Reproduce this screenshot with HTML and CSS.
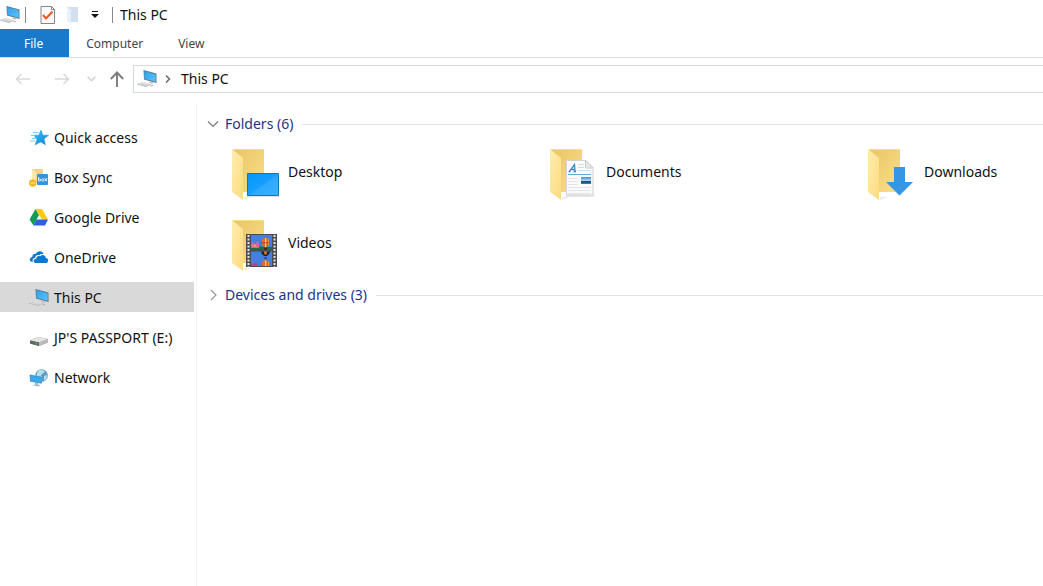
FILE: index.html
```html
<!DOCTYPE html>
<html lang="en">
<head>
<meta charset="utf-8">
<title>This PC</title>
<link rel="stylesheet" href="styles.css">
</head>
<body>
<svg class="defs" aria-hidden="true">
  <defs>
    <linearGradient id="screen" x1="0" y1="0" x2="1" y2="1"><stop offset="0" stop-color="#2f9fe8"/><stop offset="1" stop-color="#58c4ff"/></linearGradient>
    <linearGradient id="back" x1="0" y1="0" x2="1" y2="1"><stop offset="0" stop-color="#e8c566"/><stop offset="1" stop-color="#fbdf8a"/></linearGradient>
    <linearGradient id="flap" x1="0" y1="0" x2="1" y2="1"><stop offset="0" stop-color="#ffedb0"/><stop offset="1" stop-color="#fddb80"/></linearGradient>
    <linearGradient id="desk" x1="0" y1="0" x2="1" y2="1"><stop offset="0" stop-color="#0596f8"/><stop offset=".5" stop-color="#159fff"/><stop offset=".52" stop-color="#2ba9ff"/><stop offset="1" stop-color="#3db2ff"/></linearGradient>
    <linearGradient id="star" x1="0" y1="0" x2="1" y2="1"><stop offset="0" stop-color="#3fc0fa"/><stop offset="1" stop-color="#0b82d6"/></linearGradient>
    <linearGradient id="photo" x1="0" y1="0" x2="0" y2="1"><stop offset="0" stop-color="#3b8fdc"/><stop offset=".55" stop-color="#b5dcf2"/><stop offset=".6" stop-color="#25414f"/><stop offset="1" stop-color="#2d83c5"/></linearGradient>
    <linearGradient id="balloon"><stop offset="0" stop-color="#c22a3a"/><stop offset=".2" stop-color="#f08a20"/><stop offset=".35" stop-color="#e63a2b"/><stop offset=".5" stop-color="#ffd93a"/><stop offset=".7" stop-color="#e8432a"/><stop offset=".85" stop-color="#f7b326"/><stop offset="1" stop-color="#7b2b4e"/></linearGradient>
    <symbol id="pc" viewBox="0 0 20 18">
      <path d="M6.500 0 19.500 3.500v9.500L7 9.500z" fill="#5e7584"/>
      <path d="M7.200 1 18.700 4.200v7.600L7.600 8.800z" fill="url(#screen)"/>
      <path d="m13 11.500 3 1v1.200l-4-1z" fill="#b4babe"/>
      <path d="M0 14 5.500 12l8.500 2.200-5 2.300z" fill="#e2e4e6"/>
      <path d="m0 14 9 2.500 5-2.300" fill="none" stroke="#a9b0b5" stroke-width=".8"/>
      <path d="m3 13 7.500 2.500M6 12.500l-4 2M9 13l-4 2M11.500 13.800l-4 2" fill="none" stroke="#c3c8cc" stroke-width=".5"/>
      <path d="m13 16 2-1 1.500.6-2 1z" fill="#a5abb0"/>
    </symbol>
    <symbol id="folder" viewBox="0 0 32 52">
      <path d="M12 48h8l-8 3z" fill="#eee"/>
      <path d="M1 0h31v43H11z" fill="url(#back)"/>
      <path d="M0 0l11 9v42L0 43z" fill="url(#flap)"/>
      <path d="M0 0h32v1H1z" fill="#f8dc8a"/>
    </symbol>
  </defs>
</svg>
<div class="window">
  <header>
    <div class="titlebar">
      <svg class="icon app" aria-hidden="true"><use href="#pc"/></svg>
      <span class="sep"></span>
      <div class="tools">
        <button aria-label="Properties"><svg width="16" height="20" viewBox="0 0 16 20"><path d="M1 1.500h10.500l3 3v14H1z" fill="#fafafa" stroke="#858585"/><path d="M11.500 1.500v3h3" fill="none" stroke="#858585"/><path d="m3 10 3 3.500 6.500-7" fill="none" stroke="#f0571b" stroke-width="2"/></svg></button>
        <button aria-label="New folder"><svg width="13" height="18" viewBox="0 0 13 18"><path d="M1 1h11v15H4z" fill="#d3dff0"/><path d="m1 1 4 3v14l-4-3z" fill="#e9f0f9"/></svg></button>
        <button aria-label="Customize toolbar"><svg width="8" height="8" viewBox="0 0 8 8"><path d="M1 0h6v1H1zM0 3h8L4 7z" fill="#111"/></svg></button>
      </div>
      <span class="sep"></span>
      <h1>This PC</h1>
    </div>
    <nav class="tabs" aria-label="Ribbon">
      <button class="tab file">File</button>
      <button class="tab">Computer</button>
      <button class="tab">View</button>
    </nav>
    <div class="addressbar">
      <div class="history">
        <button aria-label="Back"><svg width="16" height="14" viewBox="0 0 16 14"><path d="M15 7H1.500M6.500 2 1.500 7l5 5" fill="none" stroke="#d9d9d9" stroke-width="1.500"/></svg></button>
        <button aria-label="Forward"><svg width="16" height="14" viewBox="0 0 16 14"><path d="M1 7h13.500M9.500 2l5 5-5 5" fill="none" stroke="#d9d9d9" stroke-width="1.500"/></svg></button>
        <button class="recent" aria-label="Recent locations"><svg width="9" height="6" viewBox="0 0 9 6"><path d="m.7.7 3.800 4 3.800-4" fill="none" stroke="#d0d0d0" stroke-width="1.600"/></svg></button>
        <button class="up" aria-label="Up"><svg width="14" height="16" viewBox="0 0 14 16"><path d="M7 16V2M.8 8 7 1.500 13.200 8" fill="none" stroke="#7c7c7c" stroke-width="1.900"/></svg></button>
      </div>
      <div class="address">
        <svg class="icon" aria-hidden="true"><use href="#pc"/></svg>
        <svg class="crumb" viewBox="0 0 6 8" aria-hidden="true"><path d="m1 .5 3.500 3.500L1 7.500" fill="none" stroke="#6b6b6b" stroke-width="1.500"/></svg>
        <a href="#this-pc">This PC</a>
      </div>
    </div>
  </header>
  <div class="body">
    <nav class="sidebar" aria-label="Locations">
      <a href="#quick"><svg class="icon" viewBox="0 0 20 18"><path d="m12 1 1.800 5.200 5.700.1-4.500 3.600 1.500 5.800L11.500 13 6 16l2-5.800L4.500 6l5.300.2z" fill="url(#star)" stroke="#2793da" stroke-width=".5"/><path d="M4 3.500h5.500M2 6.500h4M3 9.500h4M1 12h5" stroke="#7cccf2" stroke-width="1"/></svg>Quick access</a>
      <a href="#box"><svg class="icon" viewBox="0 0 20 18"><path d="M3 0h11v13H6z" fill="#f3d47f"/><path d="m3 0 4 3v12l-4-2z" fill="#ffe9a8"/><rect x="8" y="5" width="11" height="11" rx="1" fill="#3592e2"/><path d="M9.500 8v4M15.700 9.200l2.300 3M18 9.200l-2.300 3" stroke="#fff" stroke-width=".9"/><circle cx="10.500" cy="11" r="1.100" fill="none" stroke="#fff" stroke-width=".8"/><circle cx="13.700" cy="11" r="1.200" fill="none" stroke="#fff" stroke-width=".8"/><circle cx="3.700" cy="14" r="3.700" fill="#f5b918"/><path d="M1.700 14h1M3.300 14h1M4.900 14h1" stroke="#fff" stroke-width="1"/></svg>Box Sync</a>
      <a href="#google"><svg class="icon" viewBox="0 0 20 18"><path d="m6.500 0 3.500 6-5.500 10.500L.5 10.500z" fill="#159b58"/><path d="M6.500 0h6.500l6 10.500h-6z" fill="#fcc816"/><path d="M7.500 10.500H19l-3 6H4.500z" fill="#2f5fdc"/></svg>Google Drive</a>
      <a href="#onedrive"><svg class="icon" viewBox="0 0 20 18"><path d="M4 13C1 13 .5 11.500 1 9.800c.4-1.200 1.300-1.800 2.300-1.900 0-2.300 2-3.500 3.500-3C8.500 1 14 1.400 14.500 5.200c-1.800-.7-3.100-.2-4 1-2.600-.7-4.100.6-4.400 2.600C3.800 9.300 3 11 4 13z" fill="#0b78d4"/><path d="M7.200 14c-3.200 0-3.500-4 0-4.300.1-2.500 2.300-3.400 4-2.400 1.700-2.200 5.300-1.300 5.600 1.600 3.200.1 3.100 5.100 0 5.100z" fill="#0b78d4"/></svg>OneDrive</a>
      <a class="selected" href="#this-pc" aria-current="page"><svg class="icon" aria-hidden="true"><use href="#pc"/></svg>This PC</a>
      <a href="#passport"><svg class="icon" viewBox="0 0 20 18"><path d="m1 11.500 8-3.500 10 2v3.500L10 17l-9-2.500z" fill="#8b8b8b"/><path d="m1 11.500 8-3.500 10 2-9 3.500z" fill="#e4e4e4"/><path d="m1 11.500 9 2V17l-9-2.500z" fill="#626464"/><path d="M6.500 14h2v1.500h-2z" fill="#36bf47"/><path d="m10 13.500 9-3.500v3.500L10 17z" fill="#bbb"/></svg>JP'S PASSPORT (E:)</a>
      <a href="#network"><svg class="icon" viewBox="0 0 20 18"><circle cx="12.500" cy="6.500" r="6.300" fill="#5c9cc3"/><path d="M8 3c3-4 7-2 8 0l-3 2-2 3-3-1zM15 7l3-1c0 3-1 5-3 6z" fill="#b3deef"/><path d="m.5 5.500 12.500 2v7.300L1 13z" fill="#eef6fa"/><path d="m1 6 11.500 2v6.200L1.500 12.300z" fill="#38aaf0" stroke="#2676aa" stroke-width=".6"/><path d="m6 13.500 3 .5v1.500l3 .8-3 1.200-5-1.300 2-.9z" fill="#a3b9c7"/></svg>Network</a>
    </nav>
    <main id="this-pc">
      <section>
        <h2><button aria-expanded="true"><svg class="chev" viewBox="0 0 12 12"><path d="m1 3.500 5 5 5-5" fill="none" stroke="#777" stroke-width="1.200"/></svg>Folders (6)</button></h2>
        <div class="grid">
          <a href="#desktop"><svg class="big" viewBox="0 0 48 52"><use href="#folder" width="32" height="52"/><path d="M14 46h33v2H14z" fill="#d9e4eb"/><path d="M15.500 24.500h31v22h-31z" fill="url(#desk)" stroke="#0878bf"/></svg>Desktop</a>
          <a href="#documents"><svg class="big" viewBox="0 0 48 52"><use href="#folder" width="32" height="52"/><path d="M17 46h28l-2 2H15z" fill="#e6e6e6"/><path d="M16.500 11.500H36l7 7v27.500H16.500z" fill="#fbfbfb" stroke="#d2d2d2"/><path d="M35.500 11.500v7.500H43z" fill="#e9e9e9" stroke="#cdcdcd"/><path d="m19.500 22.500 5-7 .5 7M21.500 20.500h3M18.500 22.500h2M23.500 22.500h2.500" fill="none" stroke="#2a93d6" stroke-width="1.300"/><path d="M28 15.500h6M28 18.500h6M28 21.500h13" stroke="#c3e0f0"/><path d="M18 25.500h23" stroke="#5bb0e0"/><path d="M18 29.500h10M18 32.500h10M18 35.500h10M18 38.500h23M18 41.500h23M18 44.500h23" stroke="#e1e5e8"/><path d="M31 28h10v7H31z" fill="url(#photo)"/></svg>Documents</a>
          <a href="#downloads"><svg class="big" viewBox="0 0 48 52"><use href="#folder" width="32" height="52"/><path d="M26 18h11v15h8L31.500 46.500 18 33h8z" fill="#3696e6"/></svg>Downloads</a>
          <a href="#videos"><svg class="big" viewBox="0 0 48 52"><use href="#folder" width="32" height="52"/><path d="M14 14h31v33H14z" fill="#4a4c4f"/><path d="M16.500 15v32M42.500 15v32" stroke="#e6e6e6" stroke-width="2" stroke-dasharray="2 1.500"/><path d="M19 15h21v15H19zM19 31.500h21V46H19z" fill="#4480e2"/><path d="M19 29v-2l5-1 8 1h8v3H19z" fill="#1c6b45"/><path d="m19 24 2-2 2 3 2-4 2 3v4h-8z" fill="#e0609a"/><path d="m20 26 3-2 2 3z" fill="#f3a445"/><path d="M33.500 18c2.800 0 4.500 2 4.500 4.300 0 2-1.800 3.200-3 4.700h-3c-1.200-1.500-3-2.700-3-4.700 0-2.300 1.700-4.300 4.500-4.300z" fill="url(#balloon)"/><path d="M30 22h7v1.500h-7z" fill="#7a2a62" opacity=".45"/><path d="M32 28h3v2h-3z" fill="#3b2d22"/><path d="M29 31.500h9c0 2-2 3.500-3 4.500h-3c-1-1-3-2.500-3-4.500z" fill="#22232f"/><path d="M32 31.500h3l-.5 3h-2z" fill="#e9792b"/><path d="M32.500 37h2v2h-2z" fill="#5a3520"/><path d="M29 46c-.5-3.500 1.700-5.500 4.500-5.500s5 2 4.500 5.500z" fill="url(#balloon)"/><path d="m19 46 1-3 2 1 2-2 2 4z" fill="#b0448c"/></svg>Videos</a>
        </div>
      </section>
      <section>
        <h2><button aria-expanded="false"><svg class="chev" viewBox="0 0 12 12"><path d="m4 1 5 5-5 5" fill="none" stroke="#999" stroke-width="1.200"/></svg>Devices and drives (3)</button></h2>
      </section>
    </main>
  </div>
</div>
</body>
</html>
```
FILE: styles.css
```css
* { box-sizing: border-box; }
body {
  margin: 0;
  background: #fff;
  color: #111;
  font: 14px/20px "Noto Sans", "Open Sans", sans-serif;
}
button {
  display: flex;
  align-items: center;
  padding: 0;
  border: 0;
  background: none;
  color: inherit;
  font: inherit;
}
a { color: inherit; text-decoration: none; }
h1, h2 { margin: 0; font: inherit; }
svg { flex: none; }
.defs { position: absolute; width: 0; height: 0; }
.window { display: flex; flex-direction: column; min-height: 100vh; }
.icon { width: 20px; height: 18px; }

.titlebar { display: flex; align-items: center; height: 29px; }
.app { margin-right: 5px; }
.sep { width: 1px; height: 16px; background: #888; }
.tools { display: flex; align-items: center; gap: 12px; margin: 0 13px 0 14px; }
.tools button:first-child { margin-right: -2px; }
.titlebar h1 { margin-left: 7px; }

.tabs {
  display: flex;
  height: 29px;
  border-bottom: 1px solid #dadbdc;
  font-size: 12px;
  color: #444;
}
.tab { padding: 2px 18px 0 17px; }
.file { padding: 2px 26px 0 24px; background: #1979ca; color: #fff; }

.addressbar { display: flex; align-items: center; height: 42px; }
.history { display: flex; align-items: center; width: 133px; padding-left: 15px; }
.history button { margin-right: 23px; }
.history .recent { margin: 0 14px 0 -6px; }
.history .up { margin: 0; }
.address {
  flex: 1;
  display: flex;
  align-items: center;
  height: 28px;
  padding-left: 3px;
  border: 1px solid #d9d9d9;
  border-right: 0;
}
.crumb { width: 6px; height: 8px; margin: 0 10px 0 8px; }

.body { flex: 1; display: flex; margin-top: 3px; }
.sidebar {
  display: flex;
  flex-direction: column;
  gap: 10px;
  width: 197px;
  padding: 19px 2px 0 0;
  border-right: 1px solid #f3f3f3;
}
.sidebar a {
  display: flex;
  align-items: center;
  gap: 5px;
  height: 30px;
  padding: 2px 0 0 29px;
}
.selected { background: #d9d9d9; }

main { flex: 1; padding: 11px 0 0 10px; }
h2 { display: flex; align-items: center; gap: 9px; color: #1e3287; }
h2::after { content: ""; flex: 1; height: 1px; background: #e2e2e2; }
h2 button { gap: 6px; }
.chev { width: 12px; height: 12px; }
.grid {
  display: grid;
  grid-template-columns: repeat(auto-fill, 170px);
  gap: 19px 148px;
  padding: 15px 0 13px 25px;
}
.grid a { display: flex; gap: 8px; line-height: 46px; }
.big { width: 48px; height: 52px; }
```
